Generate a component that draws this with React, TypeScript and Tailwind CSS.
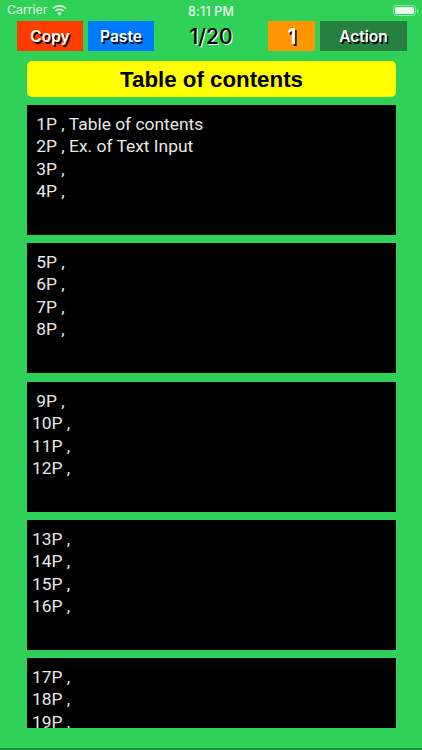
import React from "react";

function TextBox({ lines, h, mb }: { lines: string[]; h: string; mb: string }) {
  return (
    <div className={`bg-black overflow-hidden pl-[5px] pt-[8px] text-[17.4px] leading-[22.4px] text-[#e8e8e8] whitespace-pre font-['Roboto',sans-serif] ${h} ${mb}`}>
      {lines.map((l, i) => (
        <div key={i}>{l}</div>
      ))}
    </div>
  );
}

export default function App() {
  return (
    <div className="w-[422px] h-[750px] bg-[#30d158] flex flex-col overflow-hidden relative font-['Inter',sans-serif]">
      <div className="h-[21px] flex items-center justify-between pl-[7px] pr-[3px] text-white text-[12px] pt-[1px] relative shrink-0">
        <div className="flex items-center gap-[5px] opacity-85">
          <span className="text-[12.3px] -mt-[1px]">Carrier</span>
          <svg width="15" height="12" viewBox="0 0 16 12" fill="none" stroke="white" strokeLinecap="butt" className="-mt-[3px]">
            <path d="M1 4.4 A10 10 0 0 1 15 4.4" strokeWidth="1.8" />
            <path d="M3.6 7 A6.4 6.4 0 0 1 12.4 7" strokeWidth="1.8" />
            <path d="M6 9.4 A3 3 0 0 1 10 9.4 L8 11.5 Z" fill="white" strokeWidth="0.5" />
          </svg>
        </div>
        <span className="absolute left-[188px] top-[3px] font-medium text-[12.5px] tracking-[0.2px] opacity-90">8:11 PM</span>
        <div className="flex items-center mr-[1px] opacity-90 -mt-[1px]">
          <div className="w-[23px] h-[11px] rounded-[3px] border border-[#ffffff80] p-[1px]">
            <div className="w-full h-full bg-white rounded-[1.5px]" />
          </div>
          <div className="w-[1px] h-[4px] bg-[#ffffff80] ml-[1px]" />
        </div>
      </div>

      <div className="h-[30px] flex items-stretch pl-[17px] shrink-0 font-['Inter',sans-serif] font-semibold text-white text-[15.5px] [text-shadow:1.5px_1.5px_0_#000]">
        <div className="w-[66px] pt-[1px] bg-[#ff3b00] flex items-center justify-center">Copy</div>
        <div className="w-[66px] pt-[1px] ml-[5px] bg-[#007aff] flex items-center justify-center">Paste</div>
        <div className="w-[114px] pt-[1px] flex items-center justify-center text-[21px] font-medium text-black [text-shadow:1px_1px_0_#fff]">1/20</div>
        <div className="w-[47px] pt-[1px] bg-[#ff9500] flex items-center justify-center text-[22px] pl-[1px]">1</div>
        <div className="w-[87px] pt-[1px] ml-[5px] bg-[#26803f] flex items-center justify-center">Action</div>
      </div>

      <div className="flex flex-col mx-[27px] w-[369px] mt-[10px]">
        <div className="h-[36px] pt-[2px] mb-[8px] bg-[#ffff00] rounded-[5px] flex items-center justify-center text-black font-bold text-[22.3px] font-['Liberation_Sans',sans-serif]">
          Table of contents
        </div>
        <TextBox h="h-[130px]" mb="mb-[8px]" lines={[" 1P , Table of contents", " 2P , Ex. of Text Input", " 3P ,", " 4P ,"]} />
        <TextBox h="h-[130px]" mb="mb-[9px]" lines={[" 5P ,", " 6P ,", " 7P ,", " 8P ,"]} />
        <TextBox h="h-[130px]" mb="mb-[8px]" lines={[" 9P ,", "10P ,", "11P ,", "12P ,"]} />
        <TextBox h="h-[130px]" mb="mb-[8px]" lines={["13P ,", "14P ,", "15P ,", "16P ,"]} />
        <TextBox h="h-[70px]" mb="mb-0" lines={["17P ,", "18P ,", "19P ,"]} />
      </div>
      <div className="absolute left-0 right-0 bottom-0 h-[2px] bg-[#1f8a3e]" />
    </div>
  );
}
